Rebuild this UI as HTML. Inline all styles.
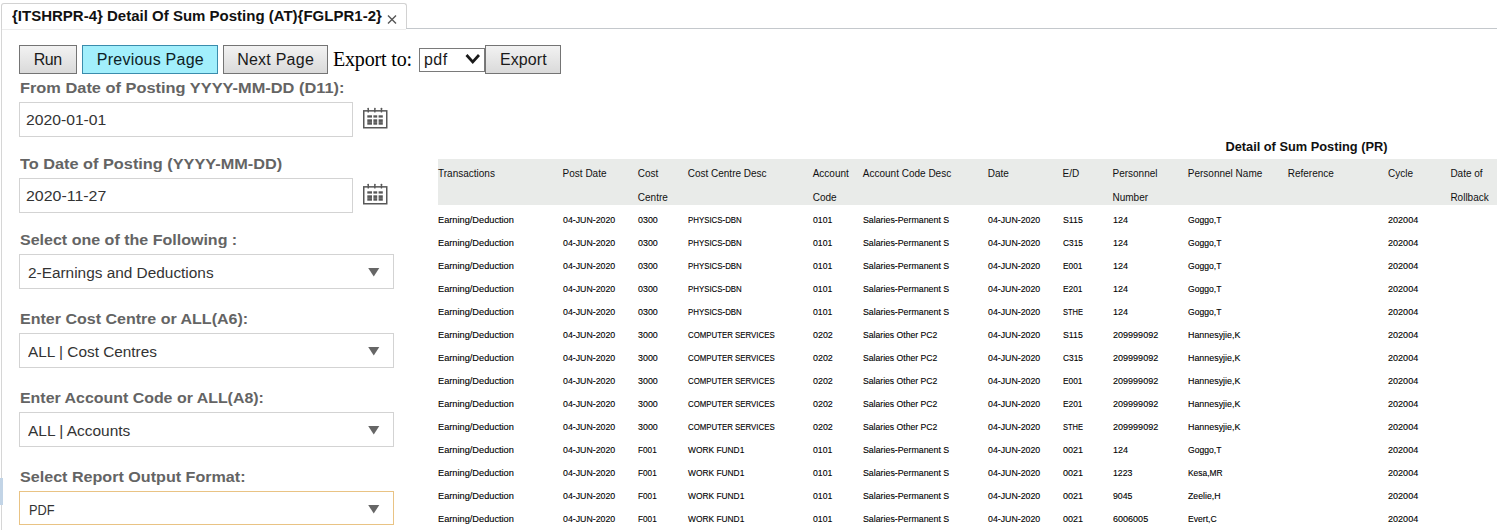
<!DOCTYPE html>
<html><head><meta charset="utf-8"><style>
html,body{margin:0;padding:0;background:#fff;}
body{width:1497px;height:530px;overflow:hidden;position:relative;font-family:"Liberation Sans",sans-serif;}
.t{position:absolute;white-space:nowrap;}
.b{position:absolute;}
</style></head><body>
<div class="b" style="left:1px;top:3px;width:406px;height:26px;border:1px solid #d2d2d2;border-bottom:0;border-radius:3px 3px 0 0;background:#fff;box-sizing:border-box"></div>
<div class="b" style="left:406px;top:28px;width:1091px;height:1px;background:#c4c8cc"></div>
<div class="b" style="left:1px;top:28px;width:1px;height:502px;background:#d6d6d6"></div>
<div class="b" style="left:0px;top:478px;width:3px;height:27px;background:#c2d4e6"></div>
<div class="b" style="left:2px;top:29px;width:404px;height:1px;background:#ececec"></div>
<div class="t" style="left:11.50px;top:8.95px;font:bold 14px/14px 'Liberation Sans',sans-serif;color:#111;letter-spacing:0.000px;transform:scaleX(1.0716);transform-origin:0 0;">{ITSHRPR-4} Detail Of Sum Posting (AT){FGLPR1-2}</div>
<svg class="b" style="left:386px;top:13px" width="12" height="12"><path d="M2 2.5L10 10.5M10 2.5L2 10.5" stroke="#555" stroke-width="1.4"/></svg>
<div class="b" style="left:19px;top:45px;width:58px;height:29px;background:linear-gradient(#f2f2f2,#e6e6e6 50%,#dadada);border:1px solid #747474;box-sizing:border-box"></div>
<div class="t" style="left:33.66px;top:52.26px;font:normal 16px/16px 'Liberation Sans',sans-serif;color:#1a1a1a;letter-spacing:-0.430px;">Run</div>
<div class="b" style="left:82px;top:45px;width:136px;height:29px;background:#a2effc;border:1px solid #3a8cac;box-sizing:border-box"></div>
<div class="t" style="left:96.80px;top:52.26px;font:normal 16px/16px 'Liberation Sans',sans-serif;color:#0e1e26;letter-spacing:0.235px;">Previous Page</div>
<div class="b" style="left:223px;top:45px;width:105px;height:29px;background:linear-gradient(#f2f2f2,#e6e6e6 50%,#dadada);border:1px solid #747474;box-sizing:border-box"></div>
<div class="t" style="left:237.20px;top:52.26px;font:normal 16px/16px 'Liberation Sans',sans-serif;color:#1a1a1a;letter-spacing:0.235px;">Next Page</div>
<div class="t" style="left:332.90px;top:49.15px;font:normal 20px/20px 'Liberation Serif',serif;color:#000;letter-spacing:-0.144px;">Export to:</div>
<div class="b" style="left:419px;top:48px;width:66px;height:24px;border:1px solid #7a7a7a;background:#fff;box-sizing:border-box"></div>
<div class="t" style="left:424.10px;top:52.26px;font:normal 16px/16px 'Liberation Sans',sans-serif;color:#1a1a1a;letter-spacing:0.380px;">pdf</div>
<svg class="b" style="left:464px;top:52px" width="18" height="14"><path d="M2.5 3L8.75 10L15 3" fill="none" stroke="#1a1a1a" stroke-width="2.7"/></svg>
<div class="b" style="left:485px;top:45px;width:76px;height:29px;background:linear-gradient(#f2f2f2,#e6e6e6 50%,#dadada);border:1px solid #747474;box-sizing:border-box"></div>
<div class="t" style="left:500.00px;top:52.26px;font:normal 16px/16px 'Liberation Sans',sans-serif;color:#1a1a1a;letter-spacing:0.092px;">Export</div>
<div class="t" style="left:19.70px;top:81.15px;font:bold 14px/14px 'Liberation Sans',sans-serif;color:#646464;letter-spacing:0.000px;transform:scaleX(1.1694);transform-origin:0 0;">From Date of Posting YYYY-MM-DD (D11):</div>
<div class="b" style="left:19px;top:102px;width:334px;height:35px;border:1px solid #d3d3d3;box-sizing:border-box;background:#fff"></div>
<div class="t" style="left:25.70px;top:113.05px;font:normal 14px/14px 'Liberation Sans',sans-serif;color:#333;letter-spacing:0.000px;transform:scaleX(1.1214);transform-origin:0 0;">2020-01-01</div>
<svg class="b" style="left:362px;top:107px" width="28" height="24"><rect x="1.75" y="3.85" width="23" height="16.9" fill="none" stroke="#585858" stroke-width="1.5"/><g fill="#585858"><rect x="5.5" y="0.7" width="1.5" height="4.8" rx="0.6"/><rect x="12.1" y="0.7" width="1.5" height="4.8" rx="0.6"/><rect x="18.7" y="0.7" width="1.5" height="4.8" rx="0.6"/><rect x="5.3" y="8.3" width="4.7" height="2.3"/><rect x="11.4" y="8.3" width="3.8" height="2.3"/><rect x="16.6" y="8.3" width="4.2" height="2.3"/><rect x="5.3" y="12.3" width="4.7" height="5.4"/><rect x="11.4" y="12.3" width="3.8" height="5.4"/><rect x="16.6" y="12.3" width="4.2" height="5.4"/></g><g fill="#fff" opacity="0.35"><rect x="5" y="14.8" width="16" height="0.6"/></g></svg>
<div class="t" style="left:19.70px;top:156.85px;font:bold 14px/14px 'Liberation Sans',sans-serif;color:#646464;letter-spacing:0.000px;transform:scaleX(1.1641);transform-origin:0 0;">To Date of Posting (YYYY-MM-DD)</div>
<div class="b" style="left:19px;top:178px;width:334px;height:35px;border:1px solid #d3d3d3;box-sizing:border-box;background:#fff"></div>
<div class="t" style="left:25.70px;top:189.15px;font:normal 14px/14px 'Liberation Sans',sans-serif;color:#333;letter-spacing:0.000px;transform:scaleX(1.1380);transform-origin:0 0;">2020-11-27</div>
<svg class="b" style="left:362px;top:183px" width="28" height="24"><rect x="1.75" y="3.85" width="23" height="16.9" fill="none" stroke="#585858" stroke-width="1.5"/><g fill="#585858"><rect x="5.5" y="0.7" width="1.5" height="4.8" rx="0.6"/><rect x="12.1" y="0.7" width="1.5" height="4.8" rx="0.6"/><rect x="18.7" y="0.7" width="1.5" height="4.8" rx="0.6"/><rect x="5.3" y="8.3" width="4.7" height="2.3"/><rect x="11.4" y="8.3" width="3.8" height="2.3"/><rect x="16.6" y="8.3" width="4.2" height="2.3"/><rect x="5.3" y="12.3" width="4.7" height="5.4"/><rect x="11.4" y="12.3" width="3.8" height="5.4"/><rect x="16.6" y="12.3" width="4.2" height="5.4"/></g><g fill="#fff" opacity="0.35"><rect x="5" y="14.8" width="16" height="0.6"/></g></svg>
<div class="t" style="left:19.70px;top:232.95px;font:bold 14px/14px 'Liberation Sans',sans-serif;color:#646464;letter-spacing:0.000px;transform:scaleX(1.1445);transform-origin:0 0;">Select one of the Following :</div>
<div class="b" style="left:19px;top:254px;width:375px;height:35px;border:1px solid #d3d3d3;box-sizing:border-box;background:#fff"></div>
<div class="t" style="left:28.00px;top:266.05px;font:normal 14px/14px 'Liberation Sans',sans-serif;color:#333;letter-spacing:0.000px;transform:scaleX(1.0988);transform-origin:0 0;">2-Earnings and Deductions</div>
<svg class="b" style="left:367px;top:267px" width="14" height="10"><path d="M1.2 0.9H12.3L6.75 9.6Z" fill="#666"/></svg>
<div class="t" style="left:19.70px;top:312.05px;font:bold 14px/14px 'Liberation Sans',sans-serif;color:#646464;letter-spacing:0.000px;transform:scaleX(1.1442);transform-origin:0 0;">Enter Cost Centre or ALL(A6):</div>
<div class="b" style="left:19px;top:333px;width:375px;height:35px;border:1px solid #d3d3d3;box-sizing:border-box;background:#fff"></div>
<div class="t" style="left:27.50px;top:344.95px;font:normal 14px/14px 'Liberation Sans',sans-serif;color:#333;letter-spacing:0.000px;transform:scaleX(1.0976);transform-origin:0 0;">ALL | Cost Centres</div>
<svg class="b" style="left:367px;top:346px" width="14" height="10"><path d="M1.2 0.9H12.3L6.75 9.6Z" fill="#666"/></svg>
<div class="t" style="left:19.70px;top:390.95px;font:bold 14px/14px 'Liberation Sans',sans-serif;color:#646464;letter-spacing:0.000px;transform:scaleX(1.1375);transform-origin:0 0;">Enter Account Code or ALL(A8):</div>
<div class="b" style="left:19px;top:412px;width:375px;height:35px;border:1px solid #d3d3d3;box-sizing:border-box;background:#fff"></div>
<div class="t" style="left:27.50px;top:423.95px;font:normal 14px/14px 'Liberation Sans',sans-serif;color:#333;letter-spacing:0.000px;transform:scaleX(1.1046);transform-origin:0 0;">ALL | Accounts</div>
<svg class="b" style="left:367px;top:425px" width="14" height="10"><path d="M1.2 0.9H12.3L6.75 9.6Z" fill="#666"/></svg>
<div class="t" style="left:19.70px;top:470.05px;font:bold 14px/14px 'Liberation Sans',sans-serif;color:#646464;letter-spacing:0.000px;transform:scaleX(1.1505);transform-origin:0 0;">Select Report Output Format:</div>
<div class="b" style="left:19px;top:491px;width:375px;height:34px;border:1px solid #e9c384;box-sizing:border-box;background:#fff"></div>
<div class="t" style="left:28.50px;top:502.95px;font:normal 14px/14px 'Liberation Sans',sans-serif;color:#333;letter-spacing:0.000px;transform:scaleX(0.9143);transform-origin:0 0;">PDF</div>
<svg class="b" style="left:367px;top:504px" width="14" height="10"><path d="M1.2 0.9H12.3L6.75 9.6Z" fill="#666"/></svg>
<div class="t" style="left:1225.40px;top:141.36px;font:bold 12.8px/12.8px 'Liberation Sans',sans-serif;color:#111;letter-spacing:-0.000px;">Detail of Sum Posting (PR)</div>
<div class="b" style="left:438px;top:159px;width:1059px;height:46px;background:#e9ebe9"></div>
<div class="t" style="left:438.00px;top:168.94px;font:normal 10px/10px 'Liberation Sans',sans-serif;color:#111;letter-spacing:0.000px;">Transactions</div>
<div class="t" style="left:562.60px;top:168.94px;font:normal 10px/10px 'Liberation Sans',sans-serif;color:#111;letter-spacing:0.000px;">Post Date</div>
<div class="t" style="left:637.80px;top:168.94px;font:normal 10px/10px 'Liberation Sans',sans-serif;color:#111;letter-spacing:0.000px;">Cost</div>
<div class="t" style="left:637.80px;top:192.73px;font:normal 10px/10px 'Liberation Sans',sans-serif;color:#111;letter-spacing:0.000px;">Centre</div>
<div class="t" style="left:687.70px;top:168.94px;font:normal 10px/10px 'Liberation Sans',sans-serif;color:#111;letter-spacing:0.000px;">Cost Centre Desc</div>
<div class="t" style="left:812.70px;top:168.94px;font:normal 10px/10px 'Liberation Sans',sans-serif;color:#111;letter-spacing:0.000px;">Account</div>
<div class="t" style="left:812.70px;top:192.73px;font:normal 10px/10px 'Liberation Sans',sans-serif;color:#111;letter-spacing:0.000px;">Code</div>
<div class="t" style="left:862.80px;top:168.94px;font:normal 10px/10px 'Liberation Sans',sans-serif;color:#111;letter-spacing:0.000px;">Account Code Desc</div>
<div class="t" style="left:987.70px;top:168.94px;font:normal 10px/10px 'Liberation Sans',sans-serif;color:#111;letter-spacing:0.000px;">Date</div>
<div class="t" style="left:1062.50px;top:168.94px;font:normal 10px/10px 'Liberation Sans',sans-serif;color:#111;letter-spacing:0.000px;">E/D</div>
<div class="t" style="left:1112.50px;top:168.94px;font:normal 10px/10px 'Liberation Sans',sans-serif;color:#111;letter-spacing:0.000px;">Personnel</div>
<div class="t" style="left:1112.50px;top:192.73px;font:normal 10px/10px 'Liberation Sans',sans-serif;color:#111;letter-spacing:0.000px;">Number</div>
<div class="t" style="left:1187.80px;top:168.94px;font:normal 10px/10px 'Liberation Sans',sans-serif;color:#111;letter-spacing:0.000px;">Personnel Name</div>
<div class="t" style="left:1287.70px;top:168.94px;font:normal 10px/10px 'Liberation Sans',sans-serif;color:#111;letter-spacing:0.000px;">Reference</div>
<div class="t" style="left:1388.00px;top:168.94px;font:normal 10px/10px 'Liberation Sans',sans-serif;color:#111;letter-spacing:0.000px;">Cycle</div>
<div class="t" style="left:1450.40px;top:168.94px;font:normal 10px/10px 'Liberation Sans',sans-serif;color:#111;letter-spacing:0.000px;">Date of</div>
<div class="t" style="left:1450.40px;top:192.73px;font:normal 10px/10px 'Liberation Sans',sans-serif;color:#111;letter-spacing:0.000px;">Rollback</div>
<div class="t" style="left:438.00px;top:216.33px;font:normal 9.3px/9.3px 'Liberation Sans',sans-serif;color:#000;letter-spacing:0.000px;transform:scaleX(0.9917);transform-origin:0 0;-webkit-text-stroke:0.12px #000;">Earning/Deduction</div>
<div class="t" style="left:562.60px;top:216.33px;font:normal 9.3px/9.3px 'Liberation Sans',sans-serif;color:#000;letter-spacing:0.000px;transform:scaleX(0.9452);transform-origin:0 0;-webkit-text-stroke:0.12px #000;">04-JUN-2020</div>
<div class="t" style="left:637.80px;top:216.33px;font:normal 9.3px/9.3px 'Liberation Sans',sans-serif;color:#000;letter-spacing:0.000px;transform:scaleX(0.9569);transform-origin:0 0;-webkit-text-stroke:0.12px #000;">0300</div>
<div class="t" style="left:687.70px;top:216.33px;font:normal 9.3px/9.3px 'Liberation Sans',sans-serif;color:#000;letter-spacing:0.000px;transform:scaleX(0.8464);transform-origin:0 0;-webkit-text-stroke:0.12px #000;">PHYSICS-DBN</div>
<div class="t" style="left:812.70px;top:216.33px;font:normal 9.3px/9.3px 'Liberation Sans',sans-serif;color:#000;letter-spacing:0.000px;transform:scaleX(0.9327);transform-origin:0 0;-webkit-text-stroke:0.12px #000;">0101</div>
<div class="t" style="left:862.80px;top:216.33px;font:normal 9.3px/9.3px 'Liberation Sans',sans-serif;color:#000;letter-spacing:0.000px;transform:scaleX(0.9472);transform-origin:0 0;-webkit-text-stroke:0.12px #000;">Salaries-Permanent S</div>
<div class="t" style="left:987.70px;top:216.33px;font:normal 9.3px/9.3px 'Liberation Sans',sans-serif;color:#000;letter-spacing:0.000px;transform:scaleX(0.9452);transform-origin:0 0;-webkit-text-stroke:0.12px #000;">04-JUN-2020</div>
<div class="t" style="left:1062.50px;top:216.33px;font:normal 9.3px/9.3px 'Liberation Sans',sans-serif;color:#000;letter-spacing:0.000px;transform:scaleX(0.9420);transform-origin:0 0;-webkit-text-stroke:0.12px #000;">S115</div>
<div class="t" style="left:1112.50px;top:216.33px;font:normal 9.3px/9.3px 'Liberation Sans',sans-serif;color:#000;letter-spacing:0.000px;transform:scaleX(0.9722);transform-origin:0 0;-webkit-text-stroke:0.12px #000;">124</div>
<div class="t" style="left:1187.80px;top:216.33px;font:normal 9.3px/9.3px 'Liberation Sans',sans-serif;color:#000;letter-spacing:0.000px;transform:scaleX(0.9232);transform-origin:0 0;-webkit-text-stroke:0.12px #000;">Goggo,T</div>
<div class="t" style="left:1388.00px;top:216.33px;font:normal 9.3px/9.3px 'Liberation Sans',sans-serif;color:#000;letter-spacing:0.000px;transform:scaleX(0.9737);transform-origin:0 0;-webkit-text-stroke:0.12px #000;">202004</div>
<div class="t" style="left:438.00px;top:239.33px;font:normal 9.3px/9.3px 'Liberation Sans',sans-serif;color:#000;letter-spacing:0.000px;transform:scaleX(0.9917);transform-origin:0 0;-webkit-text-stroke:0.12px #000;">Earning/Deduction</div>
<div class="t" style="left:562.60px;top:239.33px;font:normal 9.3px/9.3px 'Liberation Sans',sans-serif;color:#000;letter-spacing:0.000px;transform:scaleX(0.9452);transform-origin:0 0;-webkit-text-stroke:0.12px #000;">04-JUN-2020</div>
<div class="t" style="left:637.80px;top:239.33px;font:normal 9.3px/9.3px 'Liberation Sans',sans-serif;color:#000;letter-spacing:0.000px;transform:scaleX(0.9569);transform-origin:0 0;-webkit-text-stroke:0.12px #000;">0300</div>
<div class="t" style="left:687.70px;top:239.33px;font:normal 9.3px/9.3px 'Liberation Sans',sans-serif;color:#000;letter-spacing:0.000px;transform:scaleX(0.8464);transform-origin:0 0;-webkit-text-stroke:0.12px #000;">PHYSICS-DBN</div>
<div class="t" style="left:812.70px;top:239.33px;font:normal 9.3px/9.3px 'Liberation Sans',sans-serif;color:#000;letter-spacing:0.000px;transform:scaleX(0.9327);transform-origin:0 0;-webkit-text-stroke:0.12px #000;">0101</div>
<div class="t" style="left:862.80px;top:239.33px;font:normal 9.3px/9.3px 'Liberation Sans',sans-serif;color:#000;letter-spacing:0.000px;transform:scaleX(0.9472);transform-origin:0 0;-webkit-text-stroke:0.12px #000;">Salaries-Permanent S</div>
<div class="t" style="left:987.70px;top:239.33px;font:normal 9.3px/9.3px 'Liberation Sans',sans-serif;color:#000;letter-spacing:0.000px;transform:scaleX(0.9452);transform-origin:0 0;-webkit-text-stroke:0.12px #000;">04-JUN-2020</div>
<div class="t" style="left:1062.50px;top:239.33px;font:normal 9.3px/9.3px 'Liberation Sans',sans-serif;color:#000;letter-spacing:0.000px;transform:scaleX(0.8998);transform-origin:0 0;-webkit-text-stroke:0.12px #000;">C315</div>
<div class="t" style="left:1112.50px;top:239.33px;font:normal 9.3px/9.3px 'Liberation Sans',sans-serif;color:#000;letter-spacing:0.000px;transform:scaleX(0.9722);transform-origin:0 0;-webkit-text-stroke:0.12px #000;">124</div>
<div class="t" style="left:1187.80px;top:239.33px;font:normal 9.3px/9.3px 'Liberation Sans',sans-serif;color:#000;letter-spacing:0.000px;transform:scaleX(0.9232);transform-origin:0 0;-webkit-text-stroke:0.12px #000;">Goggo,T</div>
<div class="t" style="left:1388.00px;top:239.33px;font:normal 9.3px/9.3px 'Liberation Sans',sans-serif;color:#000;letter-spacing:0.000px;transform:scaleX(0.9737);transform-origin:0 0;-webkit-text-stroke:0.12px #000;">202004</div>
<div class="t" style="left:438.00px;top:262.33px;font:normal 9.3px/9.3px 'Liberation Sans',sans-serif;color:#000;letter-spacing:0.000px;transform:scaleX(0.9917);transform-origin:0 0;-webkit-text-stroke:0.12px #000;">Earning/Deduction</div>
<div class="t" style="left:562.60px;top:262.33px;font:normal 9.3px/9.3px 'Liberation Sans',sans-serif;color:#000;letter-spacing:0.000px;transform:scaleX(0.9452);transform-origin:0 0;-webkit-text-stroke:0.12px #000;">04-JUN-2020</div>
<div class="t" style="left:637.80px;top:262.33px;font:normal 9.3px/9.3px 'Liberation Sans',sans-serif;color:#000;letter-spacing:0.000px;transform:scaleX(0.9569);transform-origin:0 0;-webkit-text-stroke:0.12px #000;">0300</div>
<div class="t" style="left:687.70px;top:262.33px;font:normal 9.3px/9.3px 'Liberation Sans',sans-serif;color:#000;letter-spacing:0.000px;transform:scaleX(0.8464);transform-origin:0 0;-webkit-text-stroke:0.12px #000;">PHYSICS-DBN</div>
<div class="t" style="left:812.70px;top:262.33px;font:normal 9.3px/9.3px 'Liberation Sans',sans-serif;color:#000;letter-spacing:0.000px;transform:scaleX(0.9327);transform-origin:0 0;-webkit-text-stroke:0.12px #000;">0101</div>
<div class="t" style="left:862.80px;top:262.33px;font:normal 9.3px/9.3px 'Liberation Sans',sans-serif;color:#000;letter-spacing:0.000px;transform:scaleX(0.9472);transform-origin:0 0;-webkit-text-stroke:0.12px #000;">Salaries-Permanent S</div>
<div class="t" style="left:987.70px;top:262.33px;font:normal 9.3px/9.3px 'Liberation Sans',sans-serif;color:#000;letter-spacing:0.000px;transform:scaleX(0.9452);transform-origin:0 0;-webkit-text-stroke:0.12px #000;">04-JUN-2020</div>
<div class="t" style="left:1062.50px;top:262.33px;font:normal 9.3px/9.3px 'Liberation Sans',sans-serif;color:#000;letter-spacing:0.000px;transform:scaleX(0.8980);transform-origin:0 0;-webkit-text-stroke:0.12px #000;">E001</div>
<div class="t" style="left:1112.50px;top:262.33px;font:normal 9.3px/9.3px 'Liberation Sans',sans-serif;color:#000;letter-spacing:0.000px;transform:scaleX(0.9722);transform-origin:0 0;-webkit-text-stroke:0.12px #000;">124</div>
<div class="t" style="left:1187.80px;top:262.33px;font:normal 9.3px/9.3px 'Liberation Sans',sans-serif;color:#000;letter-spacing:0.000px;transform:scaleX(0.9232);transform-origin:0 0;-webkit-text-stroke:0.12px #000;">Goggo,T</div>
<div class="t" style="left:1388.00px;top:262.33px;font:normal 9.3px/9.3px 'Liberation Sans',sans-serif;color:#000;letter-spacing:0.000px;transform:scaleX(0.9737);transform-origin:0 0;-webkit-text-stroke:0.12px #000;">202004</div>
<div class="t" style="left:438.00px;top:285.33px;font:normal 9.3px/9.3px 'Liberation Sans',sans-serif;color:#000;letter-spacing:0.000px;transform:scaleX(0.9917);transform-origin:0 0;-webkit-text-stroke:0.12px #000;">Earning/Deduction</div>
<div class="t" style="left:562.60px;top:285.33px;font:normal 9.3px/9.3px 'Liberation Sans',sans-serif;color:#000;letter-spacing:0.000px;transform:scaleX(0.9452);transform-origin:0 0;-webkit-text-stroke:0.12px #000;">04-JUN-2020</div>
<div class="t" style="left:637.80px;top:285.33px;font:normal 9.3px/9.3px 'Liberation Sans',sans-serif;color:#000;letter-spacing:0.000px;transform:scaleX(0.9569);transform-origin:0 0;-webkit-text-stroke:0.12px #000;">0300</div>
<div class="t" style="left:687.70px;top:285.33px;font:normal 9.3px/9.3px 'Liberation Sans',sans-serif;color:#000;letter-spacing:0.000px;transform:scaleX(0.8464);transform-origin:0 0;-webkit-text-stroke:0.12px #000;">PHYSICS-DBN</div>
<div class="t" style="left:812.70px;top:285.33px;font:normal 9.3px/9.3px 'Liberation Sans',sans-serif;color:#000;letter-spacing:0.000px;transform:scaleX(0.9327);transform-origin:0 0;-webkit-text-stroke:0.12px #000;">0101</div>
<div class="t" style="left:862.80px;top:285.33px;font:normal 9.3px/9.3px 'Liberation Sans',sans-serif;color:#000;letter-spacing:0.000px;transform:scaleX(0.9472);transform-origin:0 0;-webkit-text-stroke:0.12px #000;">Salaries-Permanent S</div>
<div class="t" style="left:987.70px;top:285.33px;font:normal 9.3px/9.3px 'Liberation Sans',sans-serif;color:#000;letter-spacing:0.000px;transform:scaleX(0.9452);transform-origin:0 0;-webkit-text-stroke:0.12px #000;">04-JUN-2020</div>
<div class="t" style="left:1062.50px;top:285.33px;font:normal 9.3px/9.3px 'Liberation Sans',sans-serif;color:#000;letter-spacing:0.000px;transform:scaleX(0.8980);transform-origin:0 0;-webkit-text-stroke:0.12px #000;">E201</div>
<div class="t" style="left:1112.50px;top:285.33px;font:normal 9.3px/9.3px 'Liberation Sans',sans-serif;color:#000;letter-spacing:0.000px;transform:scaleX(0.9722);transform-origin:0 0;-webkit-text-stroke:0.12px #000;">124</div>
<div class="t" style="left:1187.80px;top:285.33px;font:normal 9.3px/9.3px 'Liberation Sans',sans-serif;color:#000;letter-spacing:0.000px;transform:scaleX(0.9232);transform-origin:0 0;-webkit-text-stroke:0.12px #000;">Goggo,T</div>
<div class="t" style="left:1388.00px;top:285.33px;font:normal 9.3px/9.3px 'Liberation Sans',sans-serif;color:#000;letter-spacing:0.000px;transform:scaleX(0.9737);transform-origin:0 0;-webkit-text-stroke:0.12px #000;">202004</div>
<div class="t" style="left:438.00px;top:308.33px;font:normal 9.3px/9.3px 'Liberation Sans',sans-serif;color:#000;letter-spacing:0.000px;transform:scaleX(0.9917);transform-origin:0 0;-webkit-text-stroke:0.12px #000;">Earning/Deduction</div>
<div class="t" style="left:562.60px;top:308.33px;font:normal 9.3px/9.3px 'Liberation Sans',sans-serif;color:#000;letter-spacing:0.000px;transform:scaleX(0.9452);transform-origin:0 0;-webkit-text-stroke:0.12px #000;">04-JUN-2020</div>
<div class="t" style="left:637.80px;top:308.33px;font:normal 9.3px/9.3px 'Liberation Sans',sans-serif;color:#000;letter-spacing:0.000px;transform:scaleX(0.9569);transform-origin:0 0;-webkit-text-stroke:0.12px #000;">0300</div>
<div class="t" style="left:687.70px;top:308.33px;font:normal 9.3px/9.3px 'Liberation Sans',sans-serif;color:#000;letter-spacing:0.000px;transform:scaleX(0.8464);transform-origin:0 0;-webkit-text-stroke:0.12px #000;">PHYSICS-DBN</div>
<div class="t" style="left:812.70px;top:308.33px;font:normal 9.3px/9.3px 'Liberation Sans',sans-serif;color:#000;letter-spacing:0.000px;transform:scaleX(0.9327);transform-origin:0 0;-webkit-text-stroke:0.12px #000;">0101</div>
<div class="t" style="left:862.80px;top:308.33px;font:normal 9.3px/9.3px 'Liberation Sans',sans-serif;color:#000;letter-spacing:0.000px;transform:scaleX(0.9472);transform-origin:0 0;-webkit-text-stroke:0.12px #000;">Salaries-Permanent S</div>
<div class="t" style="left:987.70px;top:308.33px;font:normal 9.3px/9.3px 'Liberation Sans',sans-serif;color:#000;letter-spacing:0.000px;transform:scaleX(0.9452);transform-origin:0 0;-webkit-text-stroke:0.12px #000;">04-JUN-2020</div>
<div class="t" style="left:1062.50px;top:308.33px;font:normal 9.3px/9.3px 'Liberation Sans',sans-serif;color:#000;letter-spacing:0.000px;transform:scaleX(0.8070);transform-origin:0 0;-webkit-text-stroke:0.12px #000;">STHE</div>
<div class="t" style="left:1112.50px;top:308.33px;font:normal 9.3px/9.3px 'Liberation Sans',sans-serif;color:#000;letter-spacing:0.000px;transform:scaleX(0.9722);transform-origin:0 0;-webkit-text-stroke:0.12px #000;">124</div>
<div class="t" style="left:1187.80px;top:308.33px;font:normal 9.3px/9.3px 'Liberation Sans',sans-serif;color:#000;letter-spacing:0.000px;transform:scaleX(0.9232);transform-origin:0 0;-webkit-text-stroke:0.12px #000;">Goggo,T</div>
<div class="t" style="left:1388.00px;top:308.33px;font:normal 9.3px/9.3px 'Liberation Sans',sans-serif;color:#000;letter-spacing:0.000px;transform:scaleX(0.9737);transform-origin:0 0;-webkit-text-stroke:0.12px #000;">202004</div>
<div class="t" style="left:438.00px;top:331.33px;font:normal 9.3px/9.3px 'Liberation Sans',sans-serif;color:#000;letter-spacing:0.000px;transform:scaleX(0.9917);transform-origin:0 0;-webkit-text-stroke:0.12px #000;">Earning/Deduction</div>
<div class="t" style="left:562.60px;top:331.33px;font:normal 9.3px/9.3px 'Liberation Sans',sans-serif;color:#000;letter-spacing:0.000px;transform:scaleX(0.9452);transform-origin:0 0;-webkit-text-stroke:0.12px #000;">04-JUN-2020</div>
<div class="t" style="left:637.80px;top:331.33px;font:normal 9.3px/9.3px 'Liberation Sans',sans-serif;color:#000;letter-spacing:0.000px;transform:scaleX(0.9569);transform-origin:0 0;-webkit-text-stroke:0.12px #000;">3000</div>
<div class="t" style="left:687.70px;top:331.33px;font:normal 9.3px/9.3px 'Liberation Sans',sans-serif;color:#000;letter-spacing:0.000px;transform:scaleX(0.8444);transform-origin:0 0;-webkit-text-stroke:0.12px #000;">COMPUTER SERVICES</div>
<div class="t" style="left:812.70px;top:331.33px;font:normal 9.3px/9.3px 'Liberation Sans',sans-serif;color:#000;letter-spacing:0.000px;transform:scaleX(0.9569);transform-origin:0 0;-webkit-text-stroke:0.12px #000;">0202</div>
<div class="t" style="left:862.80px;top:331.33px;font:normal 9.3px/9.3px 'Liberation Sans',sans-serif;color:#000;letter-spacing:0.000px;transform:scaleX(0.9274);transform-origin:0 0;-webkit-text-stroke:0.12px #000;">Salaries Other PC2</div>
<div class="t" style="left:987.70px;top:331.33px;font:normal 9.3px/9.3px 'Liberation Sans',sans-serif;color:#000;letter-spacing:0.000px;transform:scaleX(0.9452);transform-origin:0 0;-webkit-text-stroke:0.12px #000;">04-JUN-2020</div>
<div class="t" style="left:1062.50px;top:331.33px;font:normal 9.3px/9.3px 'Liberation Sans',sans-serif;color:#000;letter-spacing:0.000px;transform:scaleX(0.9420);transform-origin:0 0;-webkit-text-stroke:0.12px #000;">S115</div>
<div class="t" style="left:1112.50px;top:331.33px;font:normal 9.3px/9.3px 'Liberation Sans',sans-serif;color:#000;letter-spacing:0.000px;transform:scaleX(0.9711);transform-origin:0 0;-webkit-text-stroke:0.12px #000;">209999092</div>
<div class="t" style="left:1187.80px;top:331.33px;font:normal 9.3px/9.3px 'Liberation Sans',sans-serif;color:#000;letter-spacing:0.000px;transform:scaleX(0.9566);transform-origin:0 0;-webkit-text-stroke:0.12px #000;">Hannesyjie,K</div>
<div class="t" style="left:1388.00px;top:331.33px;font:normal 9.3px/9.3px 'Liberation Sans',sans-serif;color:#000;letter-spacing:0.000px;transform:scaleX(0.9737);transform-origin:0 0;-webkit-text-stroke:0.12px #000;">202004</div>
<div class="t" style="left:438.00px;top:354.33px;font:normal 9.3px/9.3px 'Liberation Sans',sans-serif;color:#000;letter-spacing:0.000px;transform:scaleX(0.9917);transform-origin:0 0;-webkit-text-stroke:0.12px #000;">Earning/Deduction</div>
<div class="t" style="left:562.60px;top:354.33px;font:normal 9.3px/9.3px 'Liberation Sans',sans-serif;color:#000;letter-spacing:0.000px;transform:scaleX(0.9452);transform-origin:0 0;-webkit-text-stroke:0.12px #000;">04-JUN-2020</div>
<div class="t" style="left:637.80px;top:354.33px;font:normal 9.3px/9.3px 'Liberation Sans',sans-serif;color:#000;letter-spacing:0.000px;transform:scaleX(0.9569);transform-origin:0 0;-webkit-text-stroke:0.12px #000;">3000</div>
<div class="t" style="left:687.70px;top:354.33px;font:normal 9.3px/9.3px 'Liberation Sans',sans-serif;color:#000;letter-spacing:0.000px;transform:scaleX(0.8444);transform-origin:0 0;-webkit-text-stroke:0.12px #000;">COMPUTER SERVICES</div>
<div class="t" style="left:812.70px;top:354.33px;font:normal 9.3px/9.3px 'Liberation Sans',sans-serif;color:#000;letter-spacing:0.000px;transform:scaleX(0.9569);transform-origin:0 0;-webkit-text-stroke:0.12px #000;">0202</div>
<div class="t" style="left:862.80px;top:354.33px;font:normal 9.3px/9.3px 'Liberation Sans',sans-serif;color:#000;letter-spacing:0.000px;transform:scaleX(0.9274);transform-origin:0 0;-webkit-text-stroke:0.12px #000;">Salaries Other PC2</div>
<div class="t" style="left:987.70px;top:354.33px;font:normal 9.3px/9.3px 'Liberation Sans',sans-serif;color:#000;letter-spacing:0.000px;transform:scaleX(0.9452);transform-origin:0 0;-webkit-text-stroke:0.12px #000;">04-JUN-2020</div>
<div class="t" style="left:1062.50px;top:354.33px;font:normal 9.3px/9.3px 'Liberation Sans',sans-serif;color:#000;letter-spacing:0.000px;transform:scaleX(0.8998);transform-origin:0 0;-webkit-text-stroke:0.12px #000;">C315</div>
<div class="t" style="left:1112.50px;top:354.33px;font:normal 9.3px/9.3px 'Liberation Sans',sans-serif;color:#000;letter-spacing:0.000px;transform:scaleX(0.9711);transform-origin:0 0;-webkit-text-stroke:0.12px #000;">209999092</div>
<div class="t" style="left:1187.80px;top:354.33px;font:normal 9.3px/9.3px 'Liberation Sans',sans-serif;color:#000;letter-spacing:0.000px;transform:scaleX(0.9566);transform-origin:0 0;-webkit-text-stroke:0.12px #000;">Hannesyjie,K</div>
<div class="t" style="left:1388.00px;top:354.33px;font:normal 9.3px/9.3px 'Liberation Sans',sans-serif;color:#000;letter-spacing:0.000px;transform:scaleX(0.9737);transform-origin:0 0;-webkit-text-stroke:0.12px #000;">202004</div>
<div class="t" style="left:438.00px;top:377.33px;font:normal 9.3px/9.3px 'Liberation Sans',sans-serif;color:#000;letter-spacing:0.000px;transform:scaleX(0.9917);transform-origin:0 0;-webkit-text-stroke:0.12px #000;">Earning/Deduction</div>
<div class="t" style="left:562.60px;top:377.33px;font:normal 9.3px/9.3px 'Liberation Sans',sans-serif;color:#000;letter-spacing:0.000px;transform:scaleX(0.9452);transform-origin:0 0;-webkit-text-stroke:0.12px #000;">04-JUN-2020</div>
<div class="t" style="left:637.80px;top:377.33px;font:normal 9.3px/9.3px 'Liberation Sans',sans-serif;color:#000;letter-spacing:0.000px;transform:scaleX(0.9569);transform-origin:0 0;-webkit-text-stroke:0.12px #000;">3000</div>
<div class="t" style="left:687.70px;top:377.33px;font:normal 9.3px/9.3px 'Liberation Sans',sans-serif;color:#000;letter-spacing:0.000px;transform:scaleX(0.8444);transform-origin:0 0;-webkit-text-stroke:0.12px #000;">COMPUTER SERVICES</div>
<div class="t" style="left:812.70px;top:377.33px;font:normal 9.3px/9.3px 'Liberation Sans',sans-serif;color:#000;letter-spacing:0.000px;transform:scaleX(0.9569);transform-origin:0 0;-webkit-text-stroke:0.12px #000;">0202</div>
<div class="t" style="left:862.80px;top:377.33px;font:normal 9.3px/9.3px 'Liberation Sans',sans-serif;color:#000;letter-spacing:0.000px;transform:scaleX(0.9274);transform-origin:0 0;-webkit-text-stroke:0.12px #000;">Salaries Other PC2</div>
<div class="t" style="left:987.70px;top:377.33px;font:normal 9.3px/9.3px 'Liberation Sans',sans-serif;color:#000;letter-spacing:0.000px;transform:scaleX(0.9452);transform-origin:0 0;-webkit-text-stroke:0.12px #000;">04-JUN-2020</div>
<div class="t" style="left:1062.50px;top:377.33px;font:normal 9.3px/9.3px 'Liberation Sans',sans-serif;color:#000;letter-spacing:0.000px;transform:scaleX(0.8980);transform-origin:0 0;-webkit-text-stroke:0.12px #000;">E001</div>
<div class="t" style="left:1112.50px;top:377.33px;font:normal 9.3px/9.3px 'Liberation Sans',sans-serif;color:#000;letter-spacing:0.000px;transform:scaleX(0.9711);transform-origin:0 0;-webkit-text-stroke:0.12px #000;">209999092</div>
<div class="t" style="left:1187.80px;top:377.33px;font:normal 9.3px/9.3px 'Liberation Sans',sans-serif;color:#000;letter-spacing:0.000px;transform:scaleX(0.9566);transform-origin:0 0;-webkit-text-stroke:0.12px #000;">Hannesyjie,K</div>
<div class="t" style="left:1388.00px;top:377.33px;font:normal 9.3px/9.3px 'Liberation Sans',sans-serif;color:#000;letter-spacing:0.000px;transform:scaleX(0.9737);transform-origin:0 0;-webkit-text-stroke:0.12px #000;">202004</div>
<div class="t" style="left:438.00px;top:400.33px;font:normal 9.3px/9.3px 'Liberation Sans',sans-serif;color:#000;letter-spacing:0.000px;transform:scaleX(0.9917);transform-origin:0 0;-webkit-text-stroke:0.12px #000;">Earning/Deduction</div>
<div class="t" style="left:562.60px;top:400.33px;font:normal 9.3px/9.3px 'Liberation Sans',sans-serif;color:#000;letter-spacing:0.000px;transform:scaleX(0.9452);transform-origin:0 0;-webkit-text-stroke:0.12px #000;">04-JUN-2020</div>
<div class="t" style="left:637.80px;top:400.33px;font:normal 9.3px/9.3px 'Liberation Sans',sans-serif;color:#000;letter-spacing:0.000px;transform:scaleX(0.9569);transform-origin:0 0;-webkit-text-stroke:0.12px #000;">3000</div>
<div class="t" style="left:687.70px;top:400.33px;font:normal 9.3px/9.3px 'Liberation Sans',sans-serif;color:#000;letter-spacing:0.000px;transform:scaleX(0.8444);transform-origin:0 0;-webkit-text-stroke:0.12px #000;">COMPUTER SERVICES</div>
<div class="t" style="left:812.70px;top:400.33px;font:normal 9.3px/9.3px 'Liberation Sans',sans-serif;color:#000;letter-spacing:0.000px;transform:scaleX(0.9569);transform-origin:0 0;-webkit-text-stroke:0.12px #000;">0202</div>
<div class="t" style="left:862.80px;top:400.33px;font:normal 9.3px/9.3px 'Liberation Sans',sans-serif;color:#000;letter-spacing:0.000px;transform:scaleX(0.9274);transform-origin:0 0;-webkit-text-stroke:0.12px #000;">Salaries Other PC2</div>
<div class="t" style="left:987.70px;top:400.33px;font:normal 9.3px/9.3px 'Liberation Sans',sans-serif;color:#000;letter-spacing:0.000px;transform:scaleX(0.9452);transform-origin:0 0;-webkit-text-stroke:0.12px #000;">04-JUN-2020</div>
<div class="t" style="left:1062.50px;top:400.33px;font:normal 9.3px/9.3px 'Liberation Sans',sans-serif;color:#000;letter-spacing:0.000px;transform:scaleX(0.8980);transform-origin:0 0;-webkit-text-stroke:0.12px #000;">E201</div>
<div class="t" style="left:1112.50px;top:400.33px;font:normal 9.3px/9.3px 'Liberation Sans',sans-serif;color:#000;letter-spacing:0.000px;transform:scaleX(0.9711);transform-origin:0 0;-webkit-text-stroke:0.12px #000;">209999092</div>
<div class="t" style="left:1187.80px;top:400.33px;font:normal 9.3px/9.3px 'Liberation Sans',sans-serif;color:#000;letter-spacing:0.000px;transform:scaleX(0.9566);transform-origin:0 0;-webkit-text-stroke:0.12px #000;">Hannesyjie,K</div>
<div class="t" style="left:1388.00px;top:400.33px;font:normal 9.3px/9.3px 'Liberation Sans',sans-serif;color:#000;letter-spacing:0.000px;transform:scaleX(0.9737);transform-origin:0 0;-webkit-text-stroke:0.12px #000;">202004</div>
<div class="t" style="left:438.00px;top:423.33px;font:normal 9.3px/9.3px 'Liberation Sans',sans-serif;color:#000;letter-spacing:0.000px;transform:scaleX(0.9917);transform-origin:0 0;-webkit-text-stroke:0.12px #000;">Earning/Deduction</div>
<div class="t" style="left:562.60px;top:423.33px;font:normal 9.3px/9.3px 'Liberation Sans',sans-serif;color:#000;letter-spacing:0.000px;transform:scaleX(0.9452);transform-origin:0 0;-webkit-text-stroke:0.12px #000;">04-JUN-2020</div>
<div class="t" style="left:637.80px;top:423.33px;font:normal 9.3px/9.3px 'Liberation Sans',sans-serif;color:#000;letter-spacing:0.000px;transform:scaleX(0.9569);transform-origin:0 0;-webkit-text-stroke:0.12px #000;">3000</div>
<div class="t" style="left:687.70px;top:423.33px;font:normal 9.3px/9.3px 'Liberation Sans',sans-serif;color:#000;letter-spacing:0.000px;transform:scaleX(0.8444);transform-origin:0 0;-webkit-text-stroke:0.12px #000;">COMPUTER SERVICES</div>
<div class="t" style="left:812.70px;top:423.33px;font:normal 9.3px/9.3px 'Liberation Sans',sans-serif;color:#000;letter-spacing:0.000px;transform:scaleX(0.9569);transform-origin:0 0;-webkit-text-stroke:0.12px #000;">0202</div>
<div class="t" style="left:862.80px;top:423.33px;font:normal 9.3px/9.3px 'Liberation Sans',sans-serif;color:#000;letter-spacing:0.000px;transform:scaleX(0.9274);transform-origin:0 0;-webkit-text-stroke:0.12px #000;">Salaries Other PC2</div>
<div class="t" style="left:987.70px;top:423.33px;font:normal 9.3px/9.3px 'Liberation Sans',sans-serif;color:#000;letter-spacing:0.000px;transform:scaleX(0.9452);transform-origin:0 0;-webkit-text-stroke:0.12px #000;">04-JUN-2020</div>
<div class="t" style="left:1062.50px;top:423.33px;font:normal 9.3px/9.3px 'Liberation Sans',sans-serif;color:#000;letter-spacing:0.000px;transform:scaleX(0.8070);transform-origin:0 0;-webkit-text-stroke:0.12px #000;">STHE</div>
<div class="t" style="left:1112.50px;top:423.33px;font:normal 9.3px/9.3px 'Liberation Sans',sans-serif;color:#000;letter-spacing:0.000px;transform:scaleX(0.9711);transform-origin:0 0;-webkit-text-stroke:0.12px #000;">209999092</div>
<div class="t" style="left:1187.80px;top:423.33px;font:normal 9.3px/9.3px 'Liberation Sans',sans-serif;color:#000;letter-spacing:0.000px;transform:scaleX(0.9566);transform-origin:0 0;-webkit-text-stroke:0.12px #000;">Hannesyjie,K</div>
<div class="t" style="left:1388.00px;top:423.33px;font:normal 9.3px/9.3px 'Liberation Sans',sans-serif;color:#000;letter-spacing:0.000px;transform:scaleX(0.9737);transform-origin:0 0;-webkit-text-stroke:0.12px #000;">202004</div>
<div class="t" style="left:438.00px;top:446.33px;font:normal 9.3px/9.3px 'Liberation Sans',sans-serif;color:#000;letter-spacing:0.000px;transform:scaleX(0.9917);transform-origin:0 0;-webkit-text-stroke:0.12px #000;">Earning/Deduction</div>
<div class="t" style="left:562.60px;top:446.33px;font:normal 9.3px/9.3px 'Liberation Sans',sans-serif;color:#000;letter-spacing:0.000px;transform:scaleX(0.9452);transform-origin:0 0;-webkit-text-stroke:0.12px #000;">04-JUN-2020</div>
<div class="t" style="left:637.80px;top:446.33px;font:normal 9.3px/9.3px 'Liberation Sans',sans-serif;color:#000;letter-spacing:0.000px;transform:scaleX(0.8819);transform-origin:0 0;-webkit-text-stroke:0.12px #000;">F001</div>
<div class="t" style="left:687.70px;top:446.33px;font:normal 9.3px/9.3px 'Liberation Sans',sans-serif;color:#000;letter-spacing:0.000px;transform:scaleX(0.9009);transform-origin:0 0;-webkit-text-stroke:0.12px #000;">WORK FUND1</div>
<div class="t" style="left:812.70px;top:446.33px;font:normal 9.3px/9.3px 'Liberation Sans',sans-serif;color:#000;letter-spacing:0.000px;transform:scaleX(0.9327);transform-origin:0 0;-webkit-text-stroke:0.12px #000;">0101</div>
<div class="t" style="left:862.80px;top:446.33px;font:normal 9.3px/9.3px 'Liberation Sans',sans-serif;color:#000;letter-spacing:0.000px;transform:scaleX(0.9472);transform-origin:0 0;-webkit-text-stroke:0.12px #000;">Salaries-Permanent S</div>
<div class="t" style="left:987.70px;top:446.33px;font:normal 9.3px/9.3px 'Liberation Sans',sans-serif;color:#000;letter-spacing:0.000px;transform:scaleX(0.9452);transform-origin:0 0;-webkit-text-stroke:0.12px #000;">04-JUN-2020</div>
<div class="t" style="left:1062.50px;top:446.33px;font:normal 9.3px/9.3px 'Liberation Sans',sans-serif;color:#000;letter-spacing:0.000px;transform:scaleX(0.9714);transform-origin:0 0;-webkit-text-stroke:0.12px #000;">0021</div>
<div class="t" style="left:1112.50px;top:446.33px;font:normal 9.3px/9.3px 'Liberation Sans',sans-serif;color:#000;letter-spacing:0.000px;transform:scaleX(0.9722);transform-origin:0 0;-webkit-text-stroke:0.12px #000;">124</div>
<div class="t" style="left:1187.80px;top:446.33px;font:normal 9.3px/9.3px 'Liberation Sans',sans-serif;color:#000;letter-spacing:0.000px;transform:scaleX(0.9232);transform-origin:0 0;-webkit-text-stroke:0.12px #000;">Goggo,T</div>
<div class="t" style="left:1388.00px;top:446.33px;font:normal 9.3px/9.3px 'Liberation Sans',sans-serif;color:#000;letter-spacing:0.000px;transform:scaleX(0.9737);transform-origin:0 0;-webkit-text-stroke:0.12px #000;">202004</div>
<div class="t" style="left:438.00px;top:469.33px;font:normal 9.3px/9.3px 'Liberation Sans',sans-serif;color:#000;letter-spacing:0.000px;transform:scaleX(0.9917);transform-origin:0 0;-webkit-text-stroke:0.12px #000;">Earning/Deduction</div>
<div class="t" style="left:562.60px;top:469.33px;font:normal 9.3px/9.3px 'Liberation Sans',sans-serif;color:#000;letter-spacing:0.000px;transform:scaleX(0.9452);transform-origin:0 0;-webkit-text-stroke:0.12px #000;">04-JUN-2020</div>
<div class="t" style="left:637.80px;top:469.33px;font:normal 9.3px/9.3px 'Liberation Sans',sans-serif;color:#000;letter-spacing:0.000px;transform:scaleX(0.8819);transform-origin:0 0;-webkit-text-stroke:0.12px #000;">F001</div>
<div class="t" style="left:687.70px;top:469.33px;font:normal 9.3px/9.3px 'Liberation Sans',sans-serif;color:#000;letter-spacing:0.000px;transform:scaleX(0.9009);transform-origin:0 0;-webkit-text-stroke:0.12px #000;">WORK FUND1</div>
<div class="t" style="left:812.70px;top:469.33px;font:normal 9.3px/9.3px 'Liberation Sans',sans-serif;color:#000;letter-spacing:0.000px;transform:scaleX(0.9327);transform-origin:0 0;-webkit-text-stroke:0.12px #000;">0101</div>
<div class="t" style="left:862.80px;top:469.33px;font:normal 9.3px/9.3px 'Liberation Sans',sans-serif;color:#000;letter-spacing:0.000px;transform:scaleX(0.9472);transform-origin:0 0;-webkit-text-stroke:0.12px #000;">Salaries-Permanent S</div>
<div class="t" style="left:987.70px;top:469.33px;font:normal 9.3px/9.3px 'Liberation Sans',sans-serif;color:#000;letter-spacing:0.000px;transform:scaleX(0.9452);transform-origin:0 0;-webkit-text-stroke:0.12px #000;">04-JUN-2020</div>
<div class="t" style="left:1062.50px;top:469.33px;font:normal 9.3px/9.3px 'Liberation Sans',sans-serif;color:#000;letter-spacing:0.000px;transform:scaleX(0.9714);transform-origin:0 0;-webkit-text-stroke:0.12px #000;">0021</div>
<div class="t" style="left:1112.50px;top:469.33px;font:normal 9.3px/9.3px 'Liberation Sans',sans-serif;color:#000;letter-spacing:0.000px;transform:scaleX(0.9424);transform-origin:0 0;-webkit-text-stroke:0.12px #000;">1223</div>
<div class="t" style="left:1187.80px;top:469.33px;font:normal 9.3px/9.3px 'Liberation Sans',sans-serif;color:#000;letter-spacing:0.000px;transform:scaleX(0.9052);transform-origin:0 0;-webkit-text-stroke:0.12px #000;">Kesa,MR</div>
<div class="t" style="left:1388.00px;top:469.33px;font:normal 9.3px/9.3px 'Liberation Sans',sans-serif;color:#000;letter-spacing:0.000px;transform:scaleX(0.9737);transform-origin:0 0;-webkit-text-stroke:0.12px #000;">202004</div>
<div class="t" style="left:438.00px;top:492.33px;font:normal 9.3px/9.3px 'Liberation Sans',sans-serif;color:#000;letter-spacing:0.000px;transform:scaleX(0.9917);transform-origin:0 0;-webkit-text-stroke:0.12px #000;">Earning/Deduction</div>
<div class="t" style="left:562.60px;top:492.33px;font:normal 9.3px/9.3px 'Liberation Sans',sans-serif;color:#000;letter-spacing:0.000px;transform:scaleX(0.9452);transform-origin:0 0;-webkit-text-stroke:0.12px #000;">04-JUN-2020</div>
<div class="t" style="left:637.80px;top:492.33px;font:normal 9.3px/9.3px 'Liberation Sans',sans-serif;color:#000;letter-spacing:0.000px;transform:scaleX(0.8819);transform-origin:0 0;-webkit-text-stroke:0.12px #000;">F001</div>
<div class="t" style="left:687.70px;top:492.33px;font:normal 9.3px/9.3px 'Liberation Sans',sans-serif;color:#000;letter-spacing:0.000px;transform:scaleX(0.9009);transform-origin:0 0;-webkit-text-stroke:0.12px #000;">WORK FUND1</div>
<div class="t" style="left:812.70px;top:492.33px;font:normal 9.3px/9.3px 'Liberation Sans',sans-serif;color:#000;letter-spacing:0.000px;transform:scaleX(0.9327);transform-origin:0 0;-webkit-text-stroke:0.12px #000;">0101</div>
<div class="t" style="left:862.80px;top:492.33px;font:normal 9.3px/9.3px 'Liberation Sans',sans-serif;color:#000;letter-spacing:0.000px;transform:scaleX(0.9472);transform-origin:0 0;-webkit-text-stroke:0.12px #000;">Salaries-Permanent S</div>
<div class="t" style="left:987.70px;top:492.33px;font:normal 9.3px/9.3px 'Liberation Sans',sans-serif;color:#000;letter-spacing:0.000px;transform:scaleX(0.9452);transform-origin:0 0;-webkit-text-stroke:0.12px #000;">04-JUN-2020</div>
<div class="t" style="left:1062.50px;top:492.33px;font:normal 9.3px/9.3px 'Liberation Sans',sans-serif;color:#000;letter-spacing:0.000px;transform:scaleX(0.9714);transform-origin:0 0;-webkit-text-stroke:0.12px #000;">0021</div>
<div class="t" style="left:1112.50px;top:492.33px;font:normal 9.3px/9.3px 'Liberation Sans',sans-serif;color:#000;letter-spacing:0.000px;transform:scaleX(0.9424);transform-origin:0 0;-webkit-text-stroke:0.12px #000;">9045</div>
<div class="t" style="left:1187.80px;top:492.33px;font:normal 9.3px/9.3px 'Liberation Sans',sans-serif;color:#000;letter-spacing:0.000px;transform:scaleX(0.9382);transform-origin:0 0;-webkit-text-stroke:0.12px #000;">Zeelie,H</div>
<div class="t" style="left:1388.00px;top:492.33px;font:normal 9.3px/9.3px 'Liberation Sans',sans-serif;color:#000;letter-spacing:0.000px;transform:scaleX(0.9737);transform-origin:0 0;-webkit-text-stroke:0.12px #000;">202004</div>
<div class="t" style="left:438.00px;top:515.33px;font:normal 9.3px/9.3px 'Liberation Sans',sans-serif;color:#000;letter-spacing:0.000px;transform:scaleX(0.9917);transform-origin:0 0;-webkit-text-stroke:0.12px #000;">Earning/Deduction</div>
<div class="t" style="left:562.60px;top:515.33px;font:normal 9.3px/9.3px 'Liberation Sans',sans-serif;color:#000;letter-spacing:0.000px;transform:scaleX(0.9452);transform-origin:0 0;-webkit-text-stroke:0.12px #000;">04-JUN-2020</div>
<div class="t" style="left:637.80px;top:515.33px;font:normal 9.3px/9.3px 'Liberation Sans',sans-serif;color:#000;letter-spacing:0.000px;transform:scaleX(0.8819);transform-origin:0 0;-webkit-text-stroke:0.12px #000;">F001</div>
<div class="t" style="left:687.70px;top:515.33px;font:normal 9.3px/9.3px 'Liberation Sans',sans-serif;color:#000;letter-spacing:0.000px;transform:scaleX(0.9009);transform-origin:0 0;-webkit-text-stroke:0.12px #000;">WORK FUND1</div>
<div class="t" style="left:812.70px;top:515.33px;font:normal 9.3px/9.3px 'Liberation Sans',sans-serif;color:#000;letter-spacing:0.000px;transform:scaleX(0.9327);transform-origin:0 0;-webkit-text-stroke:0.12px #000;">0101</div>
<div class="t" style="left:862.80px;top:515.33px;font:normal 9.3px/9.3px 'Liberation Sans',sans-serif;color:#000;letter-spacing:0.000px;transform:scaleX(0.9472);transform-origin:0 0;-webkit-text-stroke:0.12px #000;">Salaries-Permanent S</div>
<div class="t" style="left:987.70px;top:515.33px;font:normal 9.3px/9.3px 'Liberation Sans',sans-serif;color:#000;letter-spacing:0.000px;transform:scaleX(0.9452);transform-origin:0 0;-webkit-text-stroke:0.12px #000;">04-JUN-2020</div>
<div class="t" style="left:1062.50px;top:515.33px;font:normal 9.3px/9.3px 'Liberation Sans',sans-serif;color:#000;letter-spacing:0.000px;transform:scaleX(0.9714);transform-origin:0 0;-webkit-text-stroke:0.12px #000;">0021</div>
<div class="t" style="left:1112.50px;top:515.33px;font:normal 9.3px/9.3px 'Liberation Sans',sans-serif;color:#000;letter-spacing:0.000px;transform:scaleX(0.9717);transform-origin:0 0;-webkit-text-stroke:0.12px #000;">6006005</div>
<div class="t" style="left:1187.80px;top:515.33px;font:normal 9.3px/9.3px 'Liberation Sans',sans-serif;color:#000;letter-spacing:0.000px;transform:scaleX(0.9221);transform-origin:0 0;-webkit-text-stroke:0.12px #000;">Evert,C</div>
<div class="t" style="left:1388.00px;top:515.33px;font:normal 9.3px/9.3px 'Liberation Sans',sans-serif;color:#000;letter-spacing:0.000px;transform:scaleX(0.9737);transform-origin:0 0;-webkit-text-stroke:0.12px #000;">202004</div>
</body></html>
